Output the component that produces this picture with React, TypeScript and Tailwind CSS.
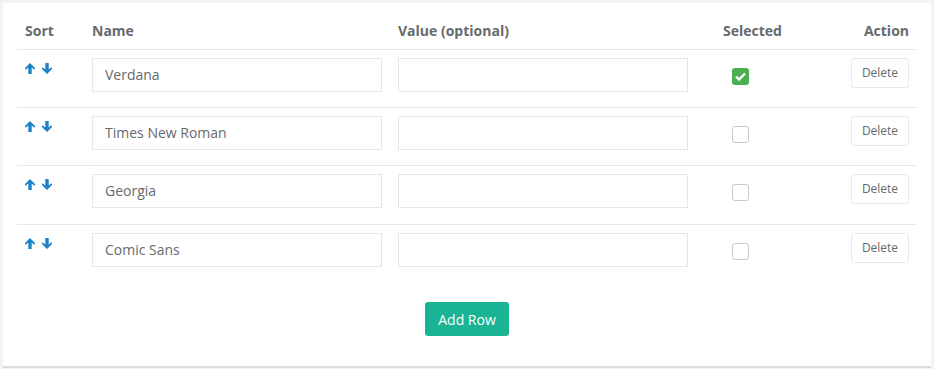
import React, { useState } from "react";

interface Row {
  id: number;
  name: string;
  value: string;
  selected: boolean;
}

const ArrowUp = () => (
  <svg width="10" height="11" viewBox="0 0 10 11" className="fill-[#1c84c6]">
    <path d="M5 0 L10 5 L10 6.2 L9 6.6 L6.7 4.6 L6.7 11 L3.3 11 L3.3 4.6 L1 6.6 L0 6.2 L0 5 Z" />
  </svg>
);

const ArrowDown = () => (
  <svg width="10" height="11" viewBox="0 0 10 11" className="fill-[#1c84c6]">
    <path d="M5 11 L10 6 L10 4.8 L9 4.4 L6.7 6.4 L6.7 0 L3.3 0 L3.3 6.4 L1 4.4 L0 4.8 L0 6 Z" />
  </svg>
);

export default function App() {
  const [rows, setRows] = useState<Row[]>([
    { id: 1, name: "Verdana", value: "", selected: true },
    { id: 2, name: "Times New Roman", value: "", selected: false },
    { id: 3, name: "Georgia", value: "", selected: false },
    { id: 4, name: "Comic Sans", value: "", selected: false },
  ]);

  const toggle = (id: number) =>
    setRows(rows.map((r) => (r.id === id ? { ...r, selected: !r.selected } : r)));

  const inputStyles =
    "w-[290px] h-[34px] border border-[#e5e6e7] px-[12px] text-[14px] text-[#676a6c] outline-none bg-white";

  return (
    <div
      className="w-[934px] h-[369px] bg-[#f3f3f4] pt-[3px] pl-[3px]"
      style={{ fontFamily: '"Open Sans", sans-serif' }}
    >
      <div className="w-[928px] h-[365px] bg-white border-b-2 border-[#dcdcdc] pt-[14px] pl-[14px]">
        <table className="w-[900px] border-collapse text-[#676a6c]">
          <thead>
            <tr className="h-[32px] border-b border-[#e7eaec] text-[14px] font-bold">
              <th className="w-[67px] text-left pl-[8px] pb-[5px]">Sort</th>
              <th className="w-[306px] text-left pl-[8px] pb-[5px]">Name</th>
              <th className="w-[325px] text-left pl-[8px] pb-[5px]">Value (optional)</th>
              <th className="w-[120px] text-left pl-[8px] pb-[5px]">Selected</th>
              <th className="text-right pr-[8px] pb-[5px]">Action</th>
            </tr>
          </thead>
          <tbody>
            {rows.map((r, i) => (
              <tr
                key={r.id}
                className={`${i === 2 ? "h-[59px]" : "h-[58px]"} align-top ${
                  i < rows.length - 1 ? "border-b border-[#e7eaec]" : ""
                }`}
              >
                <td className="pl-[8px] pt-[13px]">
                  <div className="flex gap-[7px]">
                    <ArrowUp />
                    <ArrowDown />
                  </div>
                </td>
                <td className="pl-[8px] pt-[8px]">
                  <input className={inputStyles} defaultValue={r.name} />
                </td>
                <td className="pl-[8px] pt-[8px]">
                  <input className={inputStyles} defaultValue={r.value} />
                </td>
                <td className="pl-[17px] pt-[18px]">
                  <button
                    onClick={() => toggle(r.id)}
                    className={`w-[17px] h-[17px] rounded-[3px] flex items-center justify-center ${
                      r.selected ? "bg-[#4cb050]" : "border border-[#c8c8c8] bg-white"
                    }`}
                  >
                    {r.selected && (
                      <svg width="11" height="9" viewBox="0 0 11 9">
                        <path d="M1 4.5 L4 7.5 L10 1.5" fill="none" stroke="white" strokeWidth="2.4" />
                      </svg>
                    )}
                  </button>
                </td>
                <td className="pr-[8px] pt-[8px] text-right">
                  <button className="w-[58px] h-[30px] border border-[#e7eaec] rounded-[3px] bg-white text-[12px] text-[#676a6c]">
                    Delete
                  </button>
                </td>
              </tr>
            ))}
          </tbody>
        </table>
        <div className="flex justify-center pr-[14px] mt-[20px]">
          <button
            onClick={() =>
              setRows([...rows, { id: Date.now(), name: "", value: "", selected: false }])
            }
            className="w-[84px] h-[34px] rounded-[3px] bg-[#1ab394] text-white text-[14px]"
          >
            Add Row
          </button>
        </div>
      </div>
    </div>
  );
}
